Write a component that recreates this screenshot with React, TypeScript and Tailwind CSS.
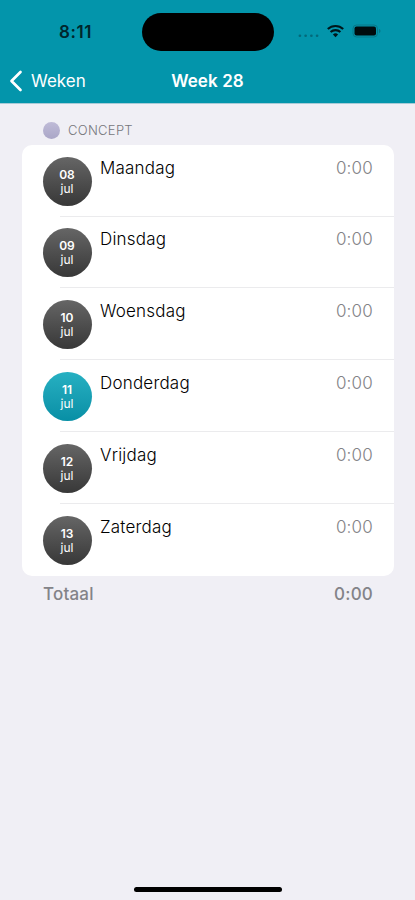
import clsx from "clsx";

interface Day {
  date: string;
  month: string;
  name: string;
  hours: string;
  today?: boolean;
}

const days: Day[] = [
  { date: "08", month: "jul", name: "Maandag", hours: "0:00" },
  { date: "09", month: "jul", name: "Dinsdag", hours: "0:00" },
  { date: "10", month: "jul", name: "Woensdag", hours: "0:00" },
  { date: "11", month: "jul", name: "Donderdag", hours: "0:00", today: true },
  { date: "12", month: "jul", name: "Vrijdag", hours: "0:00" },
  { date: "13", month: "jul", name: "Zaterdag", hours: "0:00" },
];

function StatusBar() {
  return (
    <div className="grid grid-cols-[142px_132px_141px] items-center h-[62px] pt-0.5">
      <p className="pl-[59px] text-[17px] leading-5 font-semibold tracking-[0.6px] text-[#00262c]">
        8:11
      </p>
      <div className="h-[38px] rounded-full bg-black" />
      <div className="flex items-center pl-6 -mt-0.5">
        <svg width="21" height="14" viewBox="0 0 22 14" fill="#04697a">
          <circle cx="2" cy="12" r="1.4" />
          <circle cx="8" cy="12" r="1.4" />
          <circle cx="14" cy="12" r="1.4" />
          <circle cx="20" cy="12" r="1.4" />
        </svg>
        <svg
          className="ml-2"
          width="17"
          height="14"
          viewBox="0 0 17 14"
          fill="none"
          stroke="#00161a"
          strokeWidth="2.1"
        >
          <path d="M0.8 5.1a11 11 0 0 1 15.4 0" />
          <path d="M3.6 8.1a7 7 0 0 1 9.8 0" />
          <path d="M8.5 13.2 5.9 10.5a3.8 3.8 0 0 1 5.2 0z" fill="#00161a" stroke="none" />
        </svg>
        <svg className="ml-2" width="30" height="14" viewBox="0 0 30 14">
          <rect x="1" y="1" width="24.5" height="12" rx="3.6" fill="none" stroke="#087889" />
          <rect x="2.5" y="2.5" width="21.5" height="9" rx="2" fill="#000c0e" />
          <path d="M27 5v4c.9-.3 1.5-1.1 1.5-2s-.6-1.7-1.5-2z" fill="#087889" />
        </svg>
      </div>
    </div>
  );
}

function NavBar() {
  return (
    <div className="grid grid-cols-[1fr_auto_1fr] items-center h-[37px] text-white text-[17px] leading-5">
      <button className="flex items-center pl-[9px]">
        <svg
          width="14"
          height="22"
          viewBox="0 0 14 22"
          fill="none"
          stroke="currentColor"
          strokeWidth="2.7"
          strokeLinecap="round"
          strokeLinejoin="round"
        >
          <path d="M11.5 2 2.5 11l9 9" />
        </svg>
        <span className="ml-2">Weken</span>
      </button>
      <h1 className="font-semibold tracking-[0.1px]">Week 28</h1>
    </div>
  );
}

function DayRow({ day, last }: { day: Day; last: boolean }) {
  return (
    <li className="flex flex-col h-[71.8px]">
      <div className="flex flex-1 px-[21px] pt-[11.9px]">
        <div
          className={clsx(
            "flex flex-col items-center justify-center size-[49px] shrink-0 rounded-full bg-linear-to-b text-white pt-px pr-px",
            day.today ? "from-[#26b0c2] to-[#078fa5]" : "from-[#666666] to-[#383838]",
          )}
        >
          <span className="text-xs leading-[14px] font-semibold">{day.date}</span>
          <span className="text-xs leading-[14px]">{day.month}</span>
        </div>
        <p className="ml-2 text-[17px] leading-[22px] font-light tracking-[0.2px] text-black">
          {day.name}
        </p>
        <p className="ml-auto text-[17px] leading-[22px] font-light tracking-[0.2px] text-[#828286]">
          {day.hours}
        </p>
      </div>
      {!last && <div className="ml-[38px] h-px bg-[#ebebed]" />}
    </li>
  );
}

export default function App() {
  return (
    <div className="flex flex-col w-[415px] h-[900px] bg-[#f0eff5] font-[Inter,sans-serif]">
      <header className="h-[103px] bg-[#0395ab]">
        <StatusBar />
        <NavBar />
      </header>
      <div className="h-px bg-[#a8cbd7]" />
      <main className="flex-1 pl-[22px] pr-[21px]">
        <div className="flex items-center h-[40.8px] pl-[21px] pt-3">
          <div className="size-[17px] rounded-full bg-linear-to-b from-[#bfbbd7] to-[#aaa6c7]" />
          <h2 className="ml-2 text-[13px] font-light tracking-[0.3px] text-[#77777c]">CONCEPT</h2>
        </div>
        <ul className="rounded-[10px] bg-white">
          {days.map((day, index) => (
            <DayRow key={day.date} day={day} last={index === days.length - 1} />
          ))}
        </ul>
        <div className="flex justify-between px-[21px] pt-[7px] text-[17px] leading-[22px] font-medium tracking-[0.2px] text-[#838388]">
          <p>Totaal</p>
          <p>0:00</p>
        </div>
      </main>
      <div className="mx-auto mb-2 w-[148px] h-[5px] rounded-full bg-black" />
    </div>
  );
}
